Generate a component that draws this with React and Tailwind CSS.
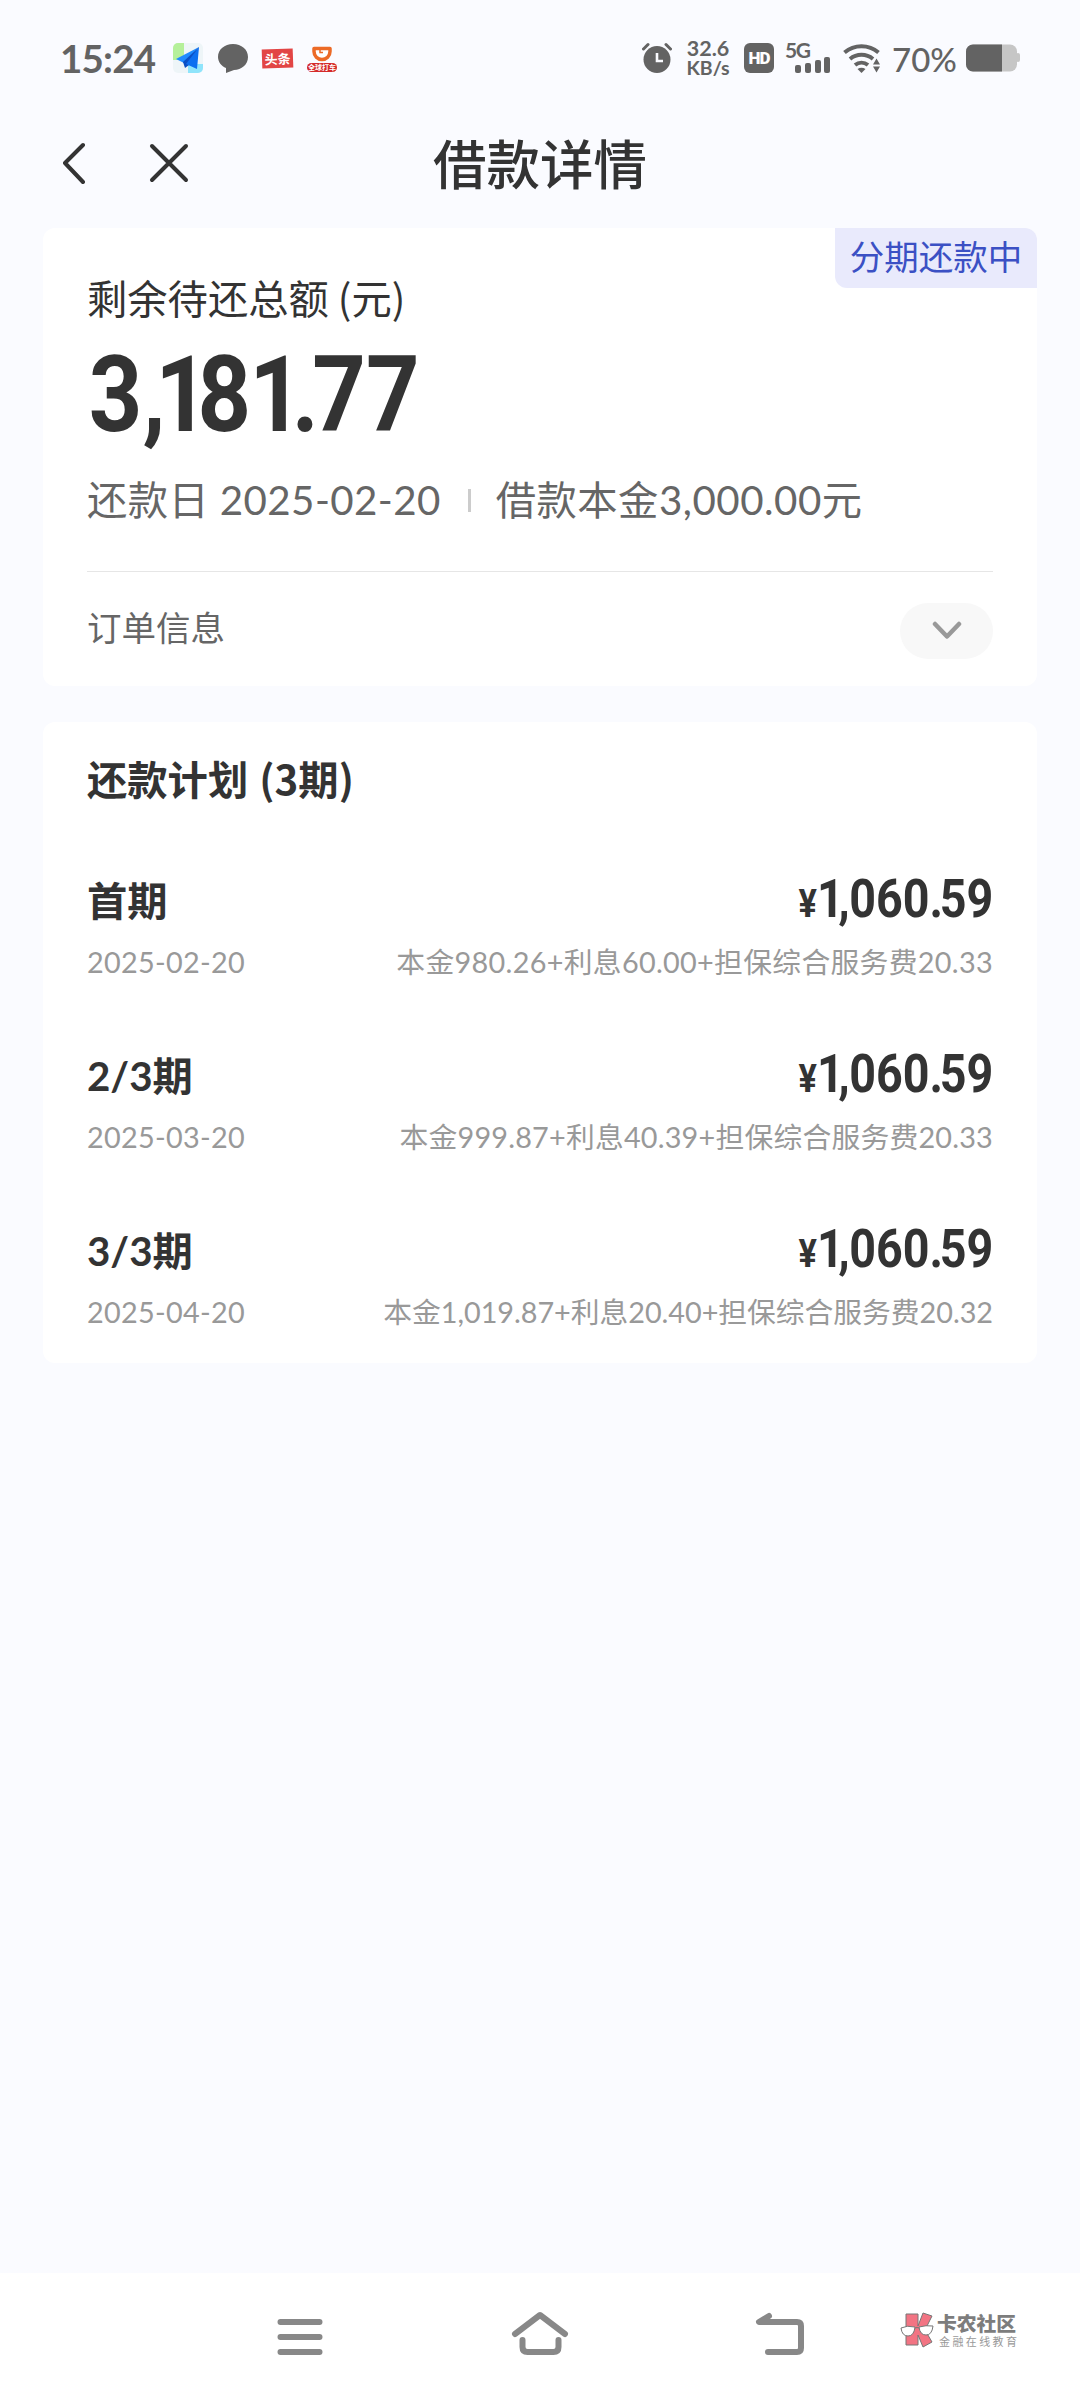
import React from 'react';

const plan = [
    { title: '首期', date: '2025-02-20', amount: '1,060.59', detail: '本金980.26+利息60.00+担保综合服务费20.33', tracking: 'tracking-[0.31px]' },
    { title: '2/3期', date: '2025-03-20', amount: '1,060.59', detail: '本金999.87+利息40.39+担保综合服务费20.33', tracking: 'tracking-[0.2px]' },
    { title: '3/3期', date: '2025-04-20', amount: '1,060.59', detail: '本金1,019.87+利息20.40+担保综合服务费20.32', tracking: 'tracking-[-0.04px]' },
];

// Narrow glyphs sit closer to their neighbours in large amounts
const glyphSpacing = {
    1: 'tracking-[-0.12em]',
    ',': 'tracking-[-0.01em]',
    ',1': 'tracking-[-0.11em]',
    81: 'tracking-[-0.02em]',
    '.': 'tracking-[-0.07em]',
};

const Amount = ({ value }) => (
    <>
        {value.split('').map((char, i) => (
            <span key={i} className={glyphSpacing[char + value[i + 1]] || glyphSpacing[char]}>{char}</span>
        ))}
    </>
);

const StatusBar = () => (
    <div className="flex h-[116px] items-center justify-between px-[60px] text-[#636363]">
        <div className="flex items-center">
            <span className="w-[96px] font-['Lato','Noto_Sans_CJK_SC',sans-serif] text-[38.5px] leading-[40px] font-bold tracking-[-0.8px]">15:24</span>
            {/* Map app */}
            <svg className="ml-[16px]" width="32" height="32" viewBox="0 0 32 32">
                <rect x="1" y="1" width="30" height="30" rx="5" fill="#eef5f8" />
                <path d="M6 1h6v17H1V6a5 5 0 0 1 5-5z" fill="#b5f09a" />
                <path d="M16 22h15v4a5 5 0 0 1-5 5H16z" fill="#8fe4fb" />
                <path d="M27 5 4 17l8 4z" fill="#1f8bff" />
                <path d="M27 5 11 20l2 6 4-3z" fill="#0a4fc4" />
                <path d="M27 5 14 22l11 5z" fill="#0d6ff0" />
            </svg>
            {/* Message bubble */}
            <svg className="ml-[13px]" width="32" height="32" viewBox="0 0 32 32">
                <path d="M16 2c8.500 0 15 5.500 15 13s-6.500 13-14 13l-8 3v-5C4.500 24 1 20 1 15 1 7.500 7.500 2 16 2z" fill="#636363" />
            </svg>
            <span className="ml-[13px] flex h-[19px] w-[31px] -rotate-2 items-center justify-center bg-[#e24545] font-['Noto_Sans_CJK_SC',sans-serif] text-[13px] leading-none font-bold text-white">头条</span>
            <span className="ml-[13px] flex w-[32px] flex-col items-center">
                <svg width="22" height="18" viewBox="0 0 22 18">
                    <path d="M3 3.500h16v3a8 8 0 0 1-16 0z" fill="#fff" stroke="#ec6a26" strokeWidth="3.500" strokeLinejoin="round" />
                    <path d="M9 4v3.500h3" fill="none" stroke="#ec6a26" strokeWidth="1.500" />
                </svg>
                <span className="flex h-[9px] w-[30px] items-center justify-center rounded-full bg-[#d42a2a] font-['Noto_Sans_CJK_SC',sans-serif] text-[7px] leading-none font-bold whitespace-nowrap text-white">全球打车</span>
            </span>
        </div>

        <div className="flex items-center">
            {/* Alarm */}
            <svg width="30" height="32" viewBox="0 0 30 32">
                <circle cx="15" cy="17.500" r="13.500" fill="#636363" />
                <path d="M1.500 7l4.500-4.500M28.500 7l-4.500-4.500" stroke="#636363" strokeWidth="3" strokeLinecap="round" />
                <path d="M15 11v8h6" fill="none" stroke="#fafbff" strokeWidth="2.600" />
            </svg>
            <div className="ml-[13px] w-[46px] text-center font-['Lato','Noto_Sans_CJK_SC',sans-serif] text-[19.5px] leading-[19px] font-bold whitespace-pre first-line:text-[21.5px]">{'32.6\nKB/s'}</div>
            <span className="ml-[13px] flex h-[30px] w-[30px] items-center justify-center rounded-[6px] bg-[#636363] font-['Roboto',sans-serif] text-[17px] leading-none font-black tracking-[-1px] text-white">HD</span>
            {/* Signal */}
            <div className="relative ml-[11px] h-[32px] w-[46px]">
                <span className="absolute -top-px left-0 font-['Lato',sans-serif] text-[21px] leading-[18px] font-bold tracking-[-1.5px]">5G</span>
                <svg className="absolute right-0 bottom-0" width="36" height="18" viewBox="0 0 36 18">
                    <rect x="0" y="9" width="6" height="8" rx="2" fill="#636363" />
                    <rect x="10" y="7" width="6" height="10" rx="2" fill="#636363" />
                    <rect x="20" y="4" width="6" height="13" rx="2" fill="#636363" />
                    <rect x="29" y="1" width="6" height="16" rx="2" fill="#636363" />
                </svg>
            </div>
            {/* Wifi */}
            <svg className="ml-[12px]" width="38" height="30" viewBox="0 0 38 30">
                <g fill="none" stroke="#636363" strokeWidth="4">
                    <path d="M1.500 9.500a26 26 0 0 1 34 0" />
                    <path d="M7 16a18 18 0 0 1 23 0" />
                    <path d="M12 22a10.500 10.500 0 0 1 13 0" />
                </g>
                <path d="M14.500 26q4-2.500 8 0l-4 4z" fill="#636363" />
                <path d="M30 21.500l3.500-6 3.500 6zM30 23.500l3.500 6 3.500-6z" fill="#636363" />
            </svg>
            <span className="ml-[11px] w-[64px] pt-[2px] font-['Lato','Noto_Sans_CJK_SC',sans-serif] text-[33px] leading-[34px] font-medium">70%</span>
            {/* Battery */}
            <svg className="ml-[10px]" width="54" height="28" viewBox="0 0 54 28">
                <rect x="0" y="0.500" width="51" height="27" rx="7" fill="#c6c6c6" />
                <rect x="50" y="9" width="4" height="9" rx="2" fill="#c6c6c6" />
                <path d="M7 .5h29v27H7a7 7 0 0 1-7-7v-13a7 7 0 0 1 7-7z" fill="#636363" />
            </svg>
        </div>
    </div>
);

const Header = () => (
    <div className="grid h-[112px] grid-cols-[1fr_auto_1fr] items-start">
        <div className="flex pt-[26px] pl-[61px]">
            <svg width="26" height="42" viewBox="0 0 26 42" fill="none" stroke="#333" strokeWidth="4" strokeLinecap="round" strokeLinejoin="round">
                <path d="M22 3 4 21l18 19" />
            </svg>
            <svg className="ml-[61px]" width="42" height="42" viewBox="0 0 42 42" fill="none" stroke="#333" strokeWidth="4" strokeLinecap="round">
                <path d="M4 4l34 34M38 4 4 38" />
            </svg>
        </div>
        <h1 className="pt-[15px] text-[53.5px] leading-[66px] font-medium">借款详情</h1>
    </div>
);

const Summary = () => (
    <section className="relative mx-[43px] h-[458px] rounded-[12px] bg-white px-[44px] pt-[45px]">
        <span className="absolute top-0 right-0 h-[60px] w-[202px] rounded-tr-[12px] rounded-bl-[12px] bg-[#e9eafc] text-center text-[34.5px] leading-[58px] text-[#3b50c4]">分期还款中</span>
        <p className="font-['Noto_Sans_CJK_SC',sans-serif] text-[40.3px] leading-[48px]">剩余待还总额 (元)</p>
        <p className="mt-[26px] w-[400px] origin-left scale-x-[.89] pl-[2px] font-['Roboto',sans-serif] text-[105px] leading-[98px] font-bold">
            <Amount value="3,181.77" />
        </p>
        <div className="mt-[31px] flex items-center text-[40.3px] leading-[48px] text-[#666]">
            <span className="tracking-[0.4px]">还款日 2025-02-20</span>
            <span className="ml-[27px] h-[23px] w-[3px] bg-[#ccc]" />
            <span className="ml-[25px] tracking-[0.5px]">借款本金3,000.00元</span>
        </div>
        <div className="mt-[47px] flex items-center justify-between border-t border-[#e6e6e6] pt-[31px]">
            <span className="-mt-[6px] text-[34.5px] leading-[48px] text-[#666]">订单信息</span>
            <span className="flex h-[56px] w-[93px] items-center justify-center rounded-full bg-[#f8f8f8]">
                <svg width="30" height="20" viewBox="0 0 30 20" fill="none" stroke="#999" strokeWidth="4.500" strokeLinecap="round" strokeLinejoin="round">
                    <path d="M3 3l12 12.500L27 3" />
                </svg>
            </span>
        </div>
    </section>
);

const PlanRow = ({ title, date, amount, detail, tracking }) => (
    <li className="flex h-[175px] flex-col">
        <div className="flex h-[56px] items-center justify-between font-bold">
            <span className="text-[40.3px] leading-[56px]">{title}</span>
            <span className="flex origin-right scale-x-[.88] items-baseline font-['Roboto',sans-serif] leading-[56px]">
                <span className="text-[39px]">¥</span>
                <span className="text-[53px]"><Amount value={amount} /></span>
            </span>
        </div>
        <div className="mt-[13px] flex items-center justify-between text-[28.8px] leading-[40px] text-[#999]">
            <span className="tracking-[0.3px]">{date}</span>
            <span className={tracking}>{detail}</span>
        </div>
    </li>
);

const Plan = () => (
    <section className="mx-[43px] mt-[36px] h-[641px] rounded-[12px] bg-white px-[44px] pt-[32px]">
        <h2 className="font-['Noto_Sans_CJK_SC',sans-serif] text-[40.3px] leading-[48px] font-bold [word-spacing:2px]">还款计划 (3期)</h2>
        <ul className="mt-[71px]">
            {plan.map((row) => (
                <PlanRow key={row.date} {...row} />
            ))}
        </ul>
    </section>
);

const NavBar = () => (
    <nav className="mt-auto flex h-[127px] items-start bg-white pt-[37px] pl-[276px]">
        <svg width="48" height="48" viewBox="0 0 48 48" stroke="#888" strokeWidth="6" strokeLinecap="round">
            <path d="M4.500 12h39M4.500 27h39M4.500 42h39" />
        </svg>
        <svg className="ml-[186px]" width="60" height="48" viewBox="0 0 60 48" fill="none" stroke="#888" strokeWidth="6" strokeLinecap="round" strokeLinejoin="round">
            <path d="M5 24 30 5l25 19" />
            <path d="M12.500 30v7q0 5 5 5h26q5 0 5-5v-7" />
        </svg>
        <svg className="ml-[184px]" width="52" height="48" viewBox="0 0 52 48" fill="none" stroke="#888" strokeWidth="6" strokeLinecap="round" strokeLinejoin="round">
            <path d="M15 6 5 12h38q4 0 4 4v22q0 4-4 4H14" />
        </svg>
        <div className="ml-[94px] flex">
            <svg width="34" height="40" viewBox="0 0 34 40" stroke="#777" strokeWidth="1">
                <path d="M6 4h12v12l5-13 9 3-7 14 7 12-9 5-5-12v10H6z" fill="#f27483" />
                <path d="M1 18q6-3 14-1-1 9-7 9t-7-8z" fill="#fff" />
                <path d="M19 17q7-2 14-1-1 9-7 9t-7-8z" fill="#fff" />
                <path d="M15 18q2-1 4 0" fill="none" />
            </svg>
            <div className="flex flex-col pl-[3px]">
                <span className="mt-px font-['Noto_Sans_CJK_SC',sans-serif] text-[19.8px] leading-[24px] font-black text-[#7d7d7d]">卡农社区</span>
                <span className="pl-[2px] text-[11px] leading-[14px] tracking-[2.4px] text-[#999]">金融在线教育</span>
            </div>
        </div>
    </nav>
);

const App = () => (
    <div className="flex h-[2400px] w-[1080px] flex-col overflow-hidden bg-[#fafbff] font-['Lato','Noto_Sans_CJK_SC',sans-serif] text-[#333]">
        <StatusBar />
        <Header />
        <Summary />
        <Plan />
        <NavBar />
    </div>
);

export default App;
